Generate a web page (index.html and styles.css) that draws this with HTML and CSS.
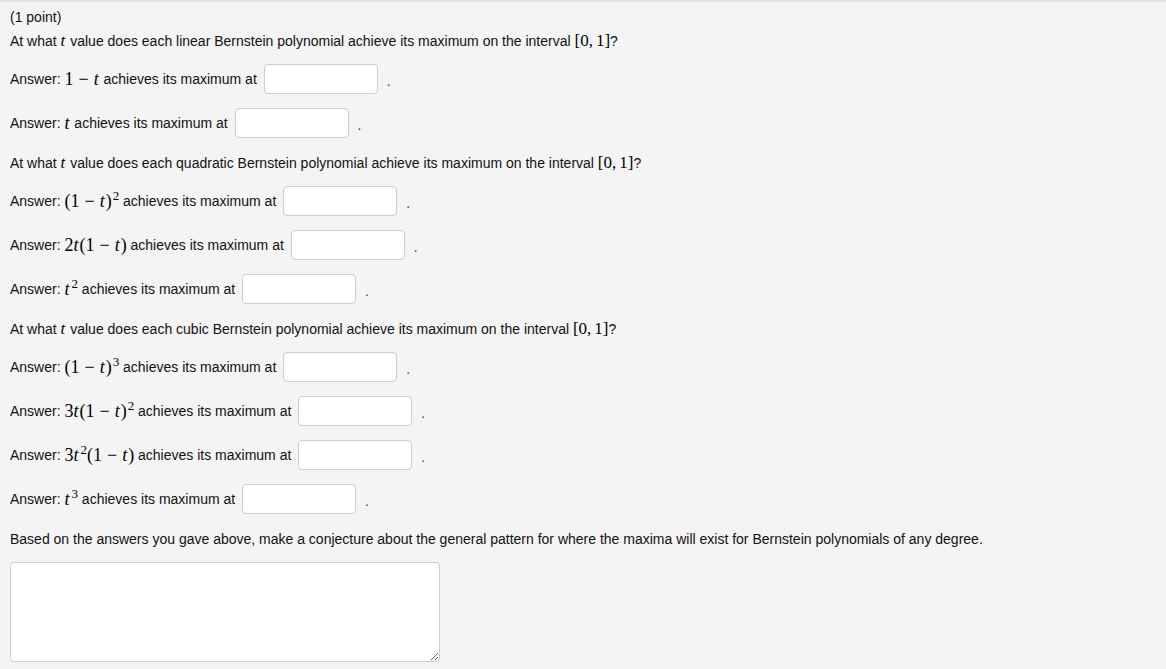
FILE: index.html
```html
<!DOCTYPE html>
<html>
<head>
<meta charset="utf-8">
<link rel="stylesheet" href="styles.css">
</head>
<body>
<div class="problem">
  <div class="line first">(1 point)</div>
  <div class="line question">At what <span class="m"><i>t</i></span> value does each linear Bernstein polynomial achieve its maximum on the interval <span class="m">[0,<span class="sp"></span>1]</span>?</div>

  <div class="row">Answer: <span class="m">1<span class="op">−</span><i>t</i></span> achieves its maximum at <input class="ans" type="text"><span class="dot">.</span></div>
  <div class="row">Answer: <span class="m"><i>t</i></span> achieves its maximum at <input class="ans" type="text"><span class="dot">.</span></div>

  <div class="line question q-gap">At what <span class="m"><i>t</i></span> value does each quadratic Bernstein polynomial achieve its maximum on the interval <span class="m">[0,<span class="sp"></span>1]</span>?</div>

  <div class="row">Answer: <span class="m">(1<span class="op">−</span><i>t</i>)<sup>2</sup></span> achieves its maximum at <input class="ans" type="text"><span class="dot">.</span></div>
  <div class="row">Answer: <span class="m">2<i>t</i>(1<span class="op">−</span><i>t</i>)</span> achieves its maximum at <input class="ans" type="text"><span class="dot">.</span></div>
  <div class="row">Answer: <span class="m"><i>t</i><sup>2</sup></span> achieves its maximum at <input class="ans" type="text"><span class="dot">.</span></div>

  <div class="line question q-gap">At what <span class="m"><i>t</i></span> value does each cubic Bernstein polynomial achieve its maximum on the interval <span class="m">[0,<span class="sp"></span>1]</span>?</div>

  <div class="row">Answer: <span class="m">(1<span class="op">−</span><i>t</i>)<sup>3</sup></span> achieves its maximum at <input class="ans" type="text"><span class="dot">.</span></div>
  <div class="row">Answer: <span class="m">3<i>t</i>(1<span class="op">−</span><i>t</i>)<sup>2</sup></span> achieves its maximum at <input class="ans" type="text"><span class="dot">.</span></div>
  <div class="row">Answer: <span class="m">3<i>t</i><sup>2</sup>(1<span class="op">−</span><i>t</i>)</span> achieves its maximum at <input class="ans" type="text"><span class="dot">.</span></div>
  <div class="row">Answer: <span class="m"><i>t</i><sup>3</sup></span> achieves its maximum at <input class="ans" type="text"><span class="dot">.</span></div>

  <div class="line question last-q">Based on the answers you gave above, make a conjecture about the general pattern for where the maxima will exist for Bernstein polynomials of any degree.</div>

  <textarea class="essay"></textarea>
</div>
</body>
</html>
```

FILE: styles.css
```css
html, body {
  margin: 0;
  padding: 0;
}
body {
  background: #f4f4f4;
  border-top: 2px solid #e4e4e4;
  font-family: "Liberation Sans", Arial, sans-serif;
  font-size: 14px;
  color: #111;
  height: 667px;
  overflow: hidden;
}
.problem {
  padding: 5px 10px 0 10px;
}
.line {
  height: 20px;
  line-height: 20px;
  white-space: nowrap;
}
.first {
  margin-bottom: 4px;
}
.question {
  margin-bottom: 13px;
}
.q-gap {
  margin-top: 15px;
}
.last-q {
  margin-top: 15px;
  margin-bottom: 13px;
}
.row {
  display: flex;
  align-items: center;
  height: 30px;
  white-space: pre;
  margin-bottom: 14px;
}
.m {
  font-family: "Liberation Serif", "Times New Roman", serif;
  font-size: 18px;
  color: #000;
}
.line .m {
  font-size: 17px;
}
.m i {
  font-style: italic;
  padding-right: 1px;
}
.op {
  display: inline-block;
  margin: 0 5px;
}
.sp {
  display: inline-block;
  width: 3px;
}
.m sup {
  font-size: 13px;
  vertical-align: 7px;
  line-height: 0;
  margin-left: 1px;
}
.ans {
  box-sizing: border-box;
  width: 114px;
  height: 30px;
  margin: 0 0 0 3px;
  padding: 4px 6px;
  border: 1px solid #cccccc;
  border-radius: 4px;
  background: #fff;
  font-size: 14px;
}
.dot {
  color: #8b1a1a;
  margin-left: 9px;
  position: relative;
  top: 2px;
}
.essay {
  display: block;
  box-sizing: border-box;
  width: 430px;
  height: 100px;
  margin: 0;
  border: 1px solid #cccccc;
  border-radius: 4px;
  background: #fff;
}
```
